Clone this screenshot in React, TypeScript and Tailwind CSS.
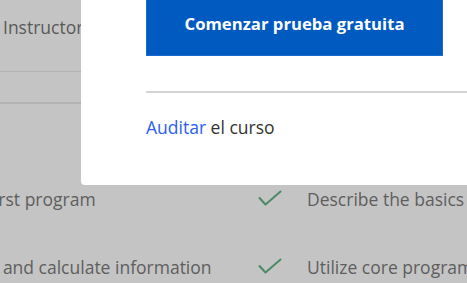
import React from "react";

function Check() {
  return (
    <svg width="24" height="16" viewBox="0 0 24 16" fill="none" className="shrink-0 mt-[-3px]">
      <path d="M1.5 8 L7.5 14.5 L22.5 1.5" stroke="#4b8a66" strokeWidth="2" strokeLinecap="round" strokeLinejoin="round" />
    </svg>
  );
}

export default function App() {
  return (
    <div
      className="relative w-[467px] h-[283px] overflow-hidden bg-[#c4c4c4]"
      style={{ fontFamily: '"Open Sans", "Noto Sans", sans-serif' }}
    >
      {/* dimmed page underneath */}
      <div className="flex flex-col">
        <div className="h-[71px] pl-[3px] pt-[15px] text-[17.5px] text-[#595959] leading-[24px] whitespace-nowrap">Instructor</div>
        <div className="h-px bg-[#b3b3b3]" />
        <div className="h-[30px]" />
        <div className="h-[2px] bg-[#b3b3b3]" />
        <div className="mt-[83px] flex flex-col gap-[44px] text-[17.5px] leading-[24px] text-[#5e5e5e]">
          <div className="flex items-center">
            <div className="w-[258px] shrink-0 overflow-visible">
              <div className="ml-[-102px] whitespace-nowrap">Write your first program</div>
            </div>
            <div className="flex items-center gap-[25px] whitespace-nowrap">
              <Check />
              <span>Describe the basics of programming</span>
            </div>
          </div>
          <div className="flex items-center">
            <div className="w-[258px] shrink-0 overflow-visible">
              <div className="ml-[-45px] whitespace-nowrap">Store and calculate information</div>
            </div>
            <div className="flex items-center gap-[25px] whitespace-nowrap">
              <Check />
              <span>Utilize core programming concepts</span>
            </div>
          </div>
        </div>
      </div>

      {/* modal */}
      <div className="absolute left-[81px] top-[-20px] w-[420px] h-[205px] bg-white rounded-[4px] pt-[12px] pl-[65px]">
        <div className="w-[297px] h-[64px] bg-[#005ac0] border border-[#1a6bce] flex items-center justify-center text-white font-bold text-[16.7px]">
          Comenzar prueba gratuita
        </div>
        <div className="mt-[35px] h-[2px] bg-[#d4d4d4]" />
        <div className="mt-[22px] text-[17.5px] leading-[24px] text-[#333] whitespace-nowrap">
          <span className="text-[#2a5ef5]">Auditar</span> el curso
        </div>
      </div>
    </div>
  );
}
